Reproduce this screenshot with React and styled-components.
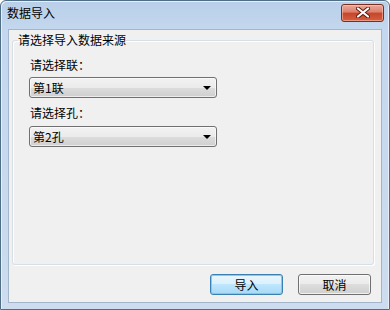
import React from "react";
import styled, { createGlobalStyle } from "styled-components";

const GlobalStyle = createGlobalStyle`
  html, body {
    margin: 0;
    padding: 0;
    background: #ffffff;
  }
  body {
    font-family: "Noto Sans CJK SC", "Liberation Sans", sans-serif;
    font-size: 12px;
    color: #000;
  }
`;

const Window = styled.div`
  width: 390px;
  height: 310px;
  box-sizing: border-box;
  display: flex;
  flex-direction: column;
  padding: 0 7px 6px 7px;
  border: 1px solid #4f6f86;
  border-radius: 6px 6px 0 0;
  background: linear-gradient(to bottom, #b9cfe9 0, #c3d7ee 28px, #cddcee 100%);
  box-shadow: inset 1px 1px 0 #e6eef8, inset -1px 0 0 #e6eef8;
`;

const TitleBar = styled.div`
  height: 28px;
  display: flex;
  align-items: center;
  justify-content: space-between;
  flex-shrink: 0;
`;

const Title = styled.span`
  font-size: 12px;
  line-height: 16px;
  margin-left: -1px;
  margin-top: -4px;
  color: #000;
`;

const CloseButton = styled.div`
  width: 43px;
  height: 18px;
  box-sizing: border-box;
  margin-right: -2px;
  margin-top: -5px;
  border: 1px solid #7a2e22;
  border-radius: 3px;
  background: linear-gradient(to bottom, #e9a99a 0%, #dd7f6a 45%, #c7442b 50%, #d4603f 100%);
  box-shadow: inset 0 0 0 1px rgba(255, 210, 200, 0.5);
  display: flex;
  align-items: center;
  justify-content: center;
`;

const Client = styled.div`
  flex: 1;
  display: flex;
  flex-direction: column;
  background: #f0f0f0;
  border: 1px solid #a3b5c9;
  padding: 2px 7px 0 3px;
`;

const GroupBox = styled.fieldset`
  margin: 0;
  height: 233px;
  box-sizing: border-box;
  padding: 0 0 0 5px;
  border: 1px solid #d5dfe5;
  border-radius: 3px;
  box-shadow: inset 1px 1px 0 #ffffff, 1px 1px 0 #ffffff;
  min-width: 0;
`;

const Legend = styled.legend`
  padding: 0;
  font-size: 12px;
  line-height: 16px;
`;

const Fields = styled.div`
  display: flex;
  flex-direction: column;
  align-items: flex-start;
  padding: 9px 0 0 11px;
`;

const FieldLabel = styled.div`
  font-size: 12px;
  line-height: 16px;
  padding-left: 1px;
  margin-top: ${({ first }) => (first ? "0" : "7px")};
  margin-bottom: ${({ first }) => (first ? "4px" : "5px")};
`;

const Select = styled.div`
  width: 188px;
  height: 21px;
  box-sizing: border-box;
  border: 1px solid #707070;
  border-radius: 3px;
  background: linear-gradient(to bottom, #f2f2f2 0%, #ebebeb 50%, #dddddd 50%, #cfcfcf 100%);
  box-shadow: inset 0 0 0 1px rgba(255, 255, 255, 0.6);
  display: flex;
  align-items: center;
  justify-content: space-between;
  padding: 0 5px 0 3px;
  font-size: 12px;
  line-height: 16px;
`;

const Arrow = styled.span`
  width: 0;
  height: 0;
  border-left: 4px solid transparent;
  border-right: 4px solid transparent;
  border-top: 4px solid #000;
  margin-top: 1px;
`;

const ButtonRow = styled.div`
  display: flex;
  justify-content: flex-end;
  gap: 15px;
  margin-top: 9px;
  padding-right: 3px;
`;

const Button = styled.div`
  width: 73px;
  height: 21px;
  box-sizing: border-box;
  border: 1px solid ${({ primary }) => (primary ? "#3c7fb1" : "#707070")};
  border-radius: 3px;
  background: ${({ primary }) =>
    primary
      ? "linear-gradient(to bottom, #eaf6fd 0%, #d9f0fc 50%, #bee6fd 50%, #a7d9f5 100%)"
      : "linear-gradient(to bottom, #f2f2f2 0%, #ebebeb 50%, #dddddd 50%, #cfcfcf 100%)"};
  box-shadow: inset 0 0 0 1px
    ${({ primary }) => (primary ? "rgba(120, 200, 240, 0.9)" : "rgba(255, 255, 255, 0.7)")};
  display: flex;
  align-items: center;
  justify-content: center;
  font-size: 12px;
  line-height: 16px;
`;

const CloseIcon = () => (
  <svg width="14" height="11" viewBox="0 0 14 11">
    <path
      d="M2 1.5 L12 9.5 M12 1.5 L2 9.5"
      stroke="#5a1a10"
      strokeWidth="4"
      strokeLinecap="round"
      fill="none"
    />
    <path
      d="M2 1.5 L12 9.5 M12 1.5 L2 9.5"
      stroke="#ffffff"
      strokeWidth="2.2"
      strokeLinecap="round"
      fill="none"
    />
  </svg>
);

const App = () => {
  return (
    <>
      <GlobalStyle />
      <Window>
        <TitleBar>
          <Title>数据导入</Title>
          <CloseButton>
            <CloseIcon />
          </CloseButton>
        </TitleBar>
        <Client>
          <GroupBox>
            <Legend>请选择导入数据来源</Legend>
            <Fields>
              <FieldLabel first>请选择联：</FieldLabel>
              <Select>
                <span>第1联</span>
                <Arrow />
              </Select>
              <FieldLabel>请选择孔：</FieldLabel>
              <Select>
                <span>第2孔</span>
                <Arrow />
              </Select>
            </Fields>
          </GroupBox>
          <ButtonRow>
            <Button primary>导入</Button>
            <Button>取消</Button>
          </ButtonRow>
        </Client>
      </Window>
    </>
  );
};

export default App;
